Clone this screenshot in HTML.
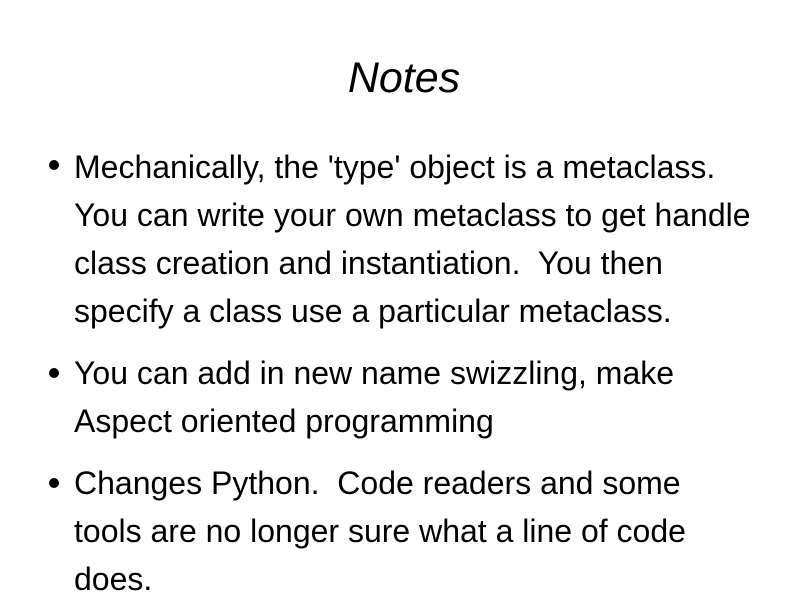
<!DOCTYPE html>
<html><head><style>
body{margin:0;width:800px;height:600px;background:#fff;font-family:"Liberation Sans",sans-serif;color:#000;position:relative;overflow:hidden}
h1{position:absolute;top:54px;left:0;width:800px;text-align:center;font-style:italic;font-weight:normal;font-size:43px;margin:0;padding-left:4px}
.l{position:absolute;left:74px;font-size:32px;white-space:nowrap}
.b{position:absolute;left:49px;width:10px;height:10px;border-radius:50%;background:#000}
</style></head><body>
<h1>Notes</h1>
<div class="b" style="top:160px"></div>
<div class="l" style="top:149px">Mechanically, the 'type' object is a metaclass.</div>
<div class="l" style="top:197px">You can write your own metaclass to get handle</div>
<div class="l" style="top:245px">class creation and instantiation.&nbsp; You then</div>
<div class="l" style="top:293px">specify a class use a particular metaclass.</div>
<div class="b" style="top:368px"></div>
<div class="l" style="top:355px">You can add in new name swizzling, make</div>
<div class="l" style="top:403px">Aspect oriented programming</div>
<div class="b" style="top:478px"></div>
<div class="l" style="top:465px">Changes Python.&nbsp; Code readers and some</div>
<div class="l" style="top:513px">tools are no longer sure what a line of code</div>
<div class="l" style="top:561px">does.</div>
</body></html>
